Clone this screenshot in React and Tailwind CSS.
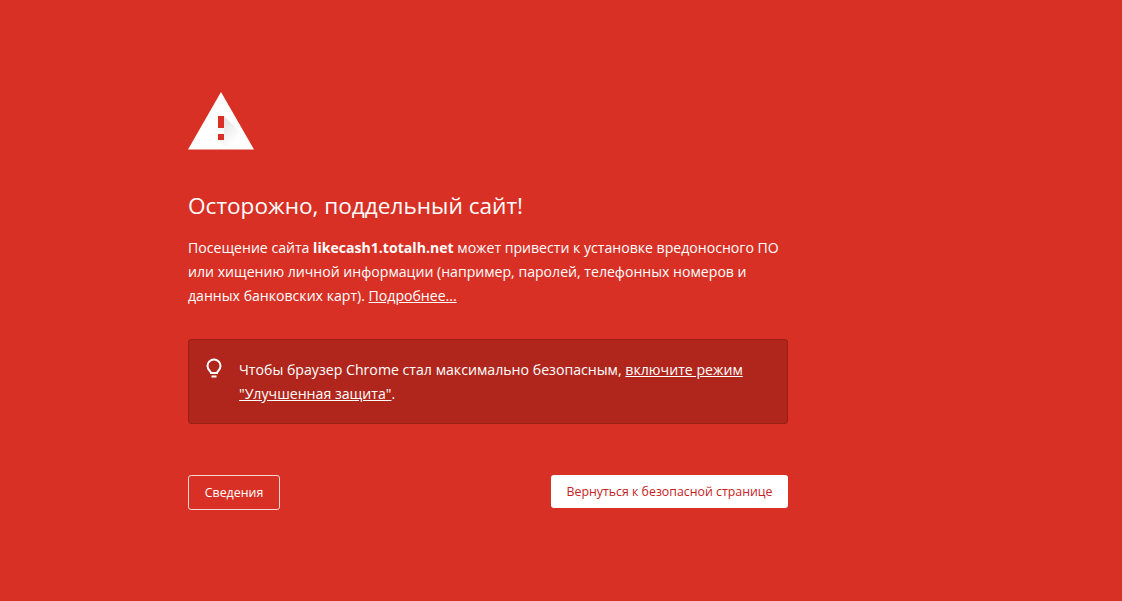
export default function App() {
  return (
    <div className="min-h-[601px] bg-[#d93025] text-white font-['Open_Sans',sans-serif] pt-[92px] pl-[188px] overflow-hidden">
      <div className="w-[600px]">
        <svg width="66" height="58" viewBox="0 0 66 58" className="block">
          <defs>
            <linearGradient id="shade" gradientUnits="userSpaceOnUse" x1="32" y1="32" x2="48" y2="48">
              <stop offset="0" stopColor="#e2e2e2" />
              <stop offset="1" stopColor="#ffffff" />
            </linearGradient>
          </defs>
          <path d="M33 0L66 57.500H0Z" fill="#fff" />
          <path d="M36 24L56 44L47 57L39 57L30 48L36 42Z" fill="url(#shade)" />
          <rect x="30" y="24" width="6" height="12" fill="#d93025" />
          <rect x="30" y="42" width="6" height="6" fill="#d93025" />
        </svg>

        <h1 className="mt-[40px] text-[22.6px] leading-[32px] font-normal">Осторожно, поддельный сайт!</h1>

        <p className="mt-[14px] text-[14.1px] leading-[24px]">
          Посещение сайта <strong className="font-bold">likecash1.totalh.net</strong> может привести к установке вредоносного ПО
          или хищению личной информации (например, паролей, телефонных номеров и данных банковских карт).{" "}
          <a className="underline">Подробнее...</a>
        </p>

        <div className="mt-[31px] h-[85px] bg-[#b0261c] border border-[#9c1f16] rounded-[3px] flex items-start pl-[15px] pt-[17px]">
          <svg width="20" height="23" viewBox="0 0 20 23" fill="none" stroke="#fff" strokeWidth="2" className="shrink-0 mt-[1px]">
            <path d="M7 15c0-1.800-3.500-2.800-3.500-7a6.500 6.500 0 0 1 13 0c0 4.200-3.500 5.200-3.500 7z" />
            <path d="M7.500 18.500h5" />
          </svg>
          <p className="ml-[15px] mt-[1px] text-[14.15px] leading-[24px] w-[530px]">
            Чтобы браузер Chrome стал максимально безопасным, <a className="underline">включите режим "Улучшенная защита"</a>.
          </p>
        </div>

        <div className="mt-[51px] flex items-start justify-between">
          <button className="h-[35px] w-[92px] border border-white/80 rounded-[3px] pt-[2px] text-[12.4px]">Сведения</button>
          <button className="h-[33px] w-[237px] bg-white rounded-[3px] pt-[2px] text-[12.35px] text-[#c5221f]">Вернуться к безопасной странице</button>
        </div>
      </div>
    </div>
  );
}
